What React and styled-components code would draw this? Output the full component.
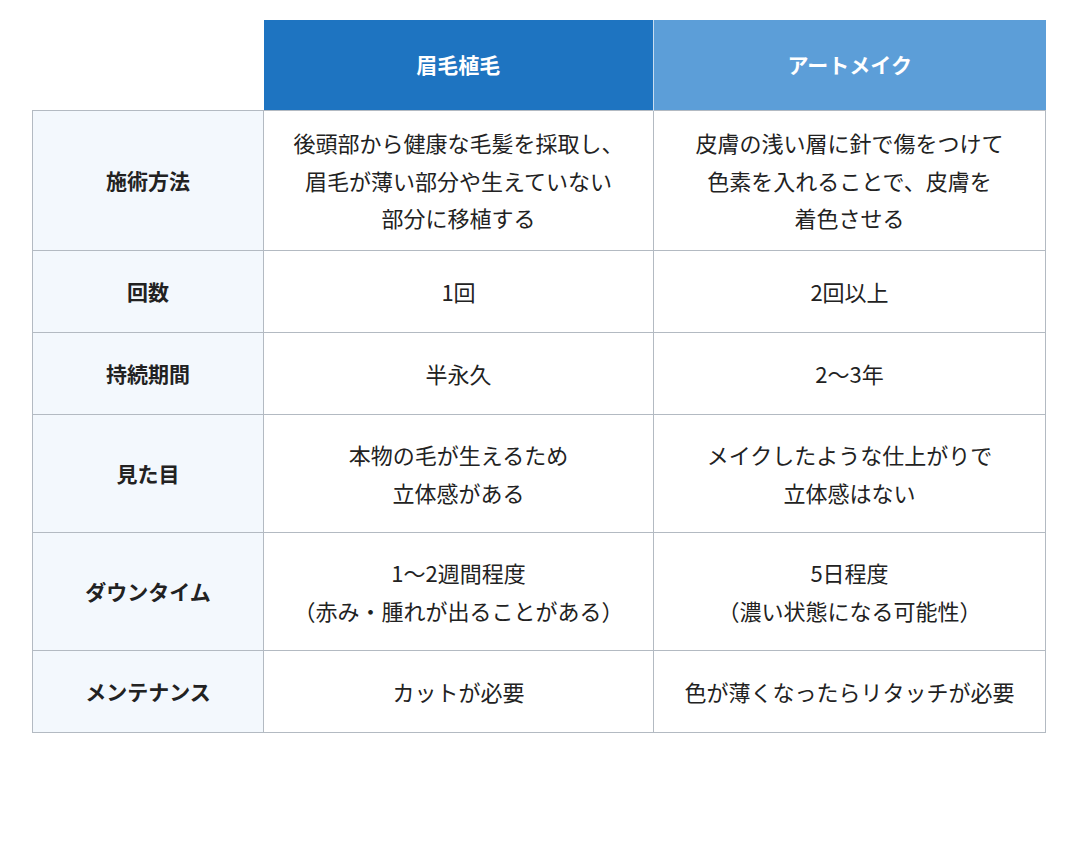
import React from "react";
import styled, { createGlobalStyle } from "styled-components";

const GlobalStyle = createGlobalStyle`
    body {
        margin: 0;
        background: #fff;
        font-family: "Noto Sans CJK JP", "Noto Sans", sans-serif;
        color: #222;
    }
`;

const rows = [
    {
        label: "施術方法",
        height: 140,
        a: ["後頭部から健康な毛髪を採取し、", "眉毛が薄い部分や生えていない", "部分に移植する"],
        b: ["皮膚の浅い層に針で傷をつけて", "色素を入れることで、皮膚を", "着色させる"],
    },
    { label: "回数", height: 82, a: ["1回"], b: ["2回以上"] },
    { label: "持続期間", height: 82, a: ["半永久"], b: ["2〜3年"] },
    {
        label: "見た目",
        height: 118,
        a: ["本物の毛が生えるため", "立体感がある"],
        b: ["メイクしたような仕上がりで", "立体感はない"],
    },
    {
        label: "ダウンタイム",
        height: 118,
        a: ["1〜2週間程度", "（赤み・腫れが出ることがある）"],
        b: ["5日程度", "（濃い状態になる可能性）"],
    },
    { label: "メンテナンス", height: 82, a: ["カットが必要"], b: ["色が薄くなったらリタッチが必要"] },
];

const App = () => {
    return (
        <Page>
            <GlobalStyle />
            <Table>
                <colgroup>
                    <col style={{ width: 231 }} />
                    <col style={{ width: 390 }} />
                    <col style={{ width: 392 }} />
                </colgroup>
                <thead>
                    <tr>
                        <Blank />
                        <HeadCell $tone="dark">眉毛植毛</HeadCell>
                        <HeadCell $tone="light">アートメイク</HeadCell>
                    </tr>
                </thead>
                <tbody>
                    {rows.map((row) => (
                        <Row key={row.label} $height={row.height}>
                            <LabelCell>{row.label}</LabelCell>
                            <Cell>
                                {row.a.map((line) => (
                                    <Line key={line}>{line}</Line>
                                ))}
                            </Cell>
                            <Cell>
                                {row.b.map((line) => (
                                    <Line key={line}>{line}</Line>
                                ))}
                            </Cell>
                        </Row>
                    ))}
                </tbody>
            </Table>
        </Page>
    );
};

const Page = styled.div`
    padding: 20px 0 0 32px;
    min-height: 858px;
    box-sizing: border-box;
`;

const Table = styled.table`
    border-collapse: collapse;
    table-layout: fixed;
    width: 1012px;
    font-size: 22px;
    line-height: 1.7;
`;

const Blank = styled.th`
    height: 90px;
    padding: 0;
    border: none;
    background: #fff;
`;

const HeadCell = styled.th`
    height: 90px;
    padding: 0;
    color: #fff;
    font-weight: 700;
    font-size: 21px;
    text-align: center;
    background: ${(p) => (p.$tone === "dark" ? "#1e74c1" : "#5c9ed8")};
    border-left: ${(p) => (p.$tone === "light" ? "1px solid #c9ddf0" : "none")};
`;

const Row = styled.tr`
    height: ${(p) => p.$height}px;
`;

const LabelCell = styled.td`
    background: #f3f8fd;
    border: 1px solid #b3bac2;
    text-align: center;
    vertical-align: middle;
    font-weight: 700;
    font-size: 21px;
    padding: 0 8px;
`;

const Cell = styled.td`
    border: 1px solid #b3bac2;
    text-align: center;
    vertical-align: middle;
    padding: 0 8px;
    background: #fff;
`;

const Line = styled.div`
    white-space: nowrap;
`;

export default App;
